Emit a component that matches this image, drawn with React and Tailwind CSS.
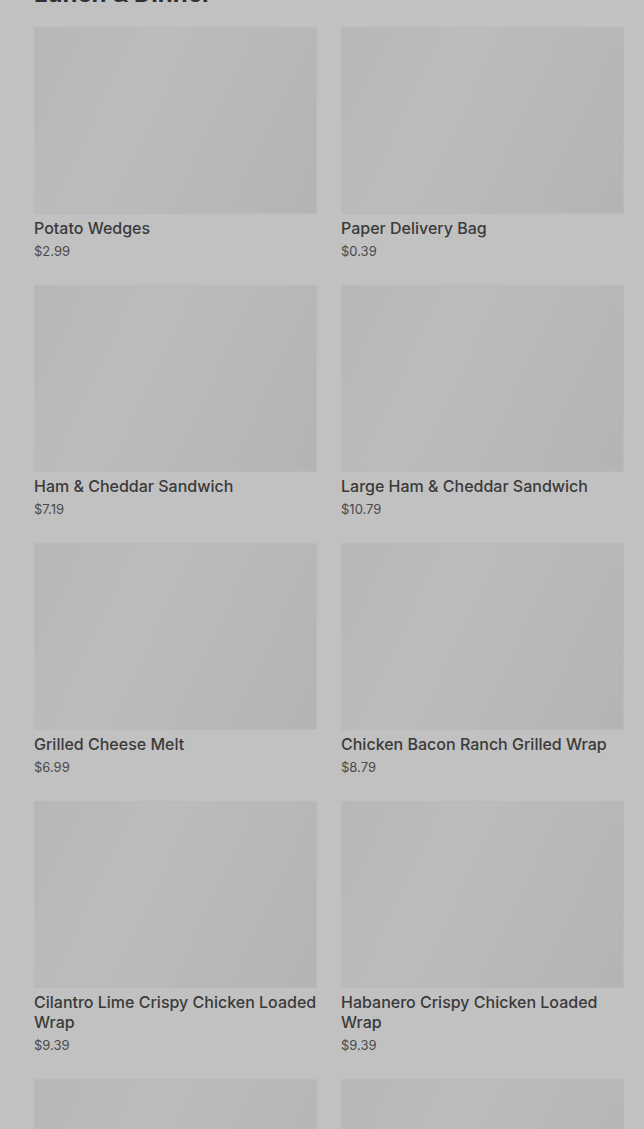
import React from "react";

const items = [
  { name: "Potato Wedges", price: "$2.99" },
  { name: "Paper Delivery Bag", price: "$0.39" },
  { name: "Ham & Cheddar Sandwich", price: "$7.19" },
  { name: "Large Ham & Cheddar Sandwich", price: "$10.79" },
  { name: "Grilled Cheese Melt", price: "$6.99" },
  { name: "Chicken Bacon Ranch Grilled Wrap", price: "$8.79" },
  { name: "Cilantro Lime Crispy Chicken Loaded Wrap", price: "$9.39" },
  { name: "Habanero Crispy Chicken Loaded Wrap", price: "$9.39" },
  { name: "Crispy Chicken Sandwich", price: "$7.49" },
  { name: "Spicy Crispy Chicken Sandwich", price: "$7.49" },
];

function ItemCard({ item }) {
  return (
    <div className="flex flex-col">
      <div className="h-[187px] w-full rounded-[2px] bg-[linear-gradient(115deg,#b7b7b7_0%,#bcbcbc_35%,#b9b9b9_60%,#b4b4b4_100%)] shadow-[inset_0_0_0_1px_#b9b9b9]" />
      <div className="mt-1 text-[16px] leading-5 font-medium text-[#3a3a3a]">
        {item.name}
      </div>
      <div className="mt-1 text-[13px] leading-[18px] text-[#4a4a4a]">
        {item.price}
      </div>
    </div>
  );
}

export default function App() {
  return (
    <div
      className="h-[1129px] overflow-hidden bg-[#c1c1c1]"
      style={{ fontFamily: "Inter, 'Liberation Sans', sans-serif" }}
    >
      <div className="pl-[34px] pr-5">
        <h2 className="-mt-[22px] text-2xl leading-8 font-bold text-[#2f2f2f]">
          Lunch &amp; Dinner
        </h2>
        <div className="mt-[17px] grid grid-cols-2 gap-x-6 gap-y-[25px]">
          {items.map((item) => (
            <ItemCard key={item.name} item={item} />
          ))}
        </div>
      </div>
    </div>
  );
}
